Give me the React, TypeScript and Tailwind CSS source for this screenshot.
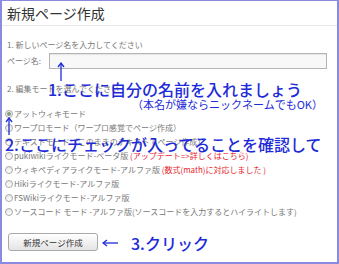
export default function App() {
  const radio = (checked: boolean) => (
    <span className="inline-flex items-center justify-center w-[8px] h-[8px] rounded-full border border-[#a8a8a8] bg-gradient-to-b from-[#e8e8e8] to-white shrink-0">
      {checked && <span className="w-[4px] h-[4px] rounded-full bg-[#7f9a80]" />}
    </span>
  );
  const rows: { t: string; r?: string; checked?: boolean }[] = [
    { t: "アットウィキモード", checked: true },
    { t: "ワープロモード（ワープロ感覚でページ作成）" },
    { t: "テキストモード（このままのテキストでページ作成）" },
    { t: "pukiwikiライクモード-ベータ版 ", r: "(アップデート=>詳しくはこちら)" },
    { t: "ウィキペディアライクモード-アルファ版 ", r: "(数式(math)に対応しました )" },
    { t: "Hikiライクモード-アルファ版" },
    { t: "FSWikiライクモード-アルファ版" },
    { t: "ソースコード モード -アルファ版(ソースコードを入力するとハイライトします)" },
  ];
  return (
    <div className="relative w-[339px] h-[264px] overflow-hidden bg-white border-[#8a8ae0] border-t border-l-2 border-r-2 border-b-2 font-['Noto_Sans_CJK_JP',sans-serif]">
      <div className="h-[25px] border-b border-[#e6e6e6] pl-[5px] pt-[3px] text-[14px] leading-[18px] text-[#333]">
        新規ページ作成
      </div>
      <div className="pl-[5px] text-[#777] text-[8px]">
        <div className="mt-[13px] leading-[12px] whitespace-nowrap">1. 新しいページ名を入力してください</div>
        <div className="mt-[2px] flex items-center h-[16px]">
          <span className="w-[42px] whitespace-nowrap">ページ名:</span>
          <div className="w-[278px] h-[16px] border border-[#b4b4b4] bg-[#f8f8f8] shadow-[inset_0_1px_1px_rgba(0,0,0,0.08)]" />
        </div>
        <div className="mt-[14px] leading-[12px] whitespace-nowrap">2. 編集モードを選んでください</div>
      </div>
      <div className="pl-[3px] mt-[12px] text-[8px] text-[#777] flex flex-col">
        {rows.map((row, i) => (
          <div key={i} className="flex items-center gap-[1px] h-[14px] leading-[14px] whitespace-nowrap">
            {radio(!!row.checked)}
            <span>
              {row.t}
              {row.r && <span className="text-[#e8242c]">{row.r}</span>}
            </span>
          </div>
        ))}
      </div>
      <div className="flex pl-[6px] mt-[14px]">
        <button className="flex items-center justify-center w-[90px] h-[18px] rounded-[3px] border border-[#a9a9a9] bg-gradient-to-b from-white to-[#e4e4e4] text-[8.5px] leading-[16px] text-[#333]">
          新規ページ作成
        </button>
      </div>

      {/* annotations */}
      <svg className="absolute left-[55px] top-[61px]" width="8" height="19" viewBox="0 0 8 19">
        <path d="M4 1 L4 19" stroke="#1e2bd8" strokeWidth="1.3" />
        <path d="M1 5 L4 1 L7 5" stroke="#1e2bd8" strokeWidth="1.3" fill="none" />
      </svg>
      <div className="absolute left-[46px] top-[78px] text-[16px] leading-[20px] font-medium text-[#1e2bd8] whitespace-nowrap">
        1.ここに自分の名前を入れましょう
      </div>
      <div className="absolute left-[130px] top-[96px] text-[11px] leading-[14px] text-[#1e2bd8] whitespace-nowrap">
        （本名が嫌ならニックネームでもOK）
      </div>
      <svg className="absolute left-[3px] top-[116px]" width="8" height="18" viewBox="0 0 8 18">
        <path d="M4 1 L4 18" stroke="#1e2bd8" strokeWidth="1.3" />
        <path d="M1 5 L4 1 L7 5" stroke="#1e2bd8" strokeWidth="1.3" fill="none" />
      </svg>
      <div className="absolute left-[3px] top-[133px] text-[16px] leading-[20px] font-medium text-[#1e2bd8] whitespace-nowrap">
        2.ここにチェックが入ってることを確認して
      </div>
      <svg className="absolute left-[100px] top-[237px]" width="16" height="10" viewBox="0 0 16 10">
        <path d="M1 5 L16 5" stroke="#1e2bd8" strokeWidth="1.3" />
        <path d="M5 2 L1 5 L5 8" stroke="#1e2bd8" strokeWidth="1.3" fill="none" />
      </svg>
      <div className="absolute left-[129px] top-[232px] text-[16px] leading-[20px] font-medium text-[#1e2bd8] whitespace-nowrap">
        3.クリック
      </div>
    </div>
  );
}
